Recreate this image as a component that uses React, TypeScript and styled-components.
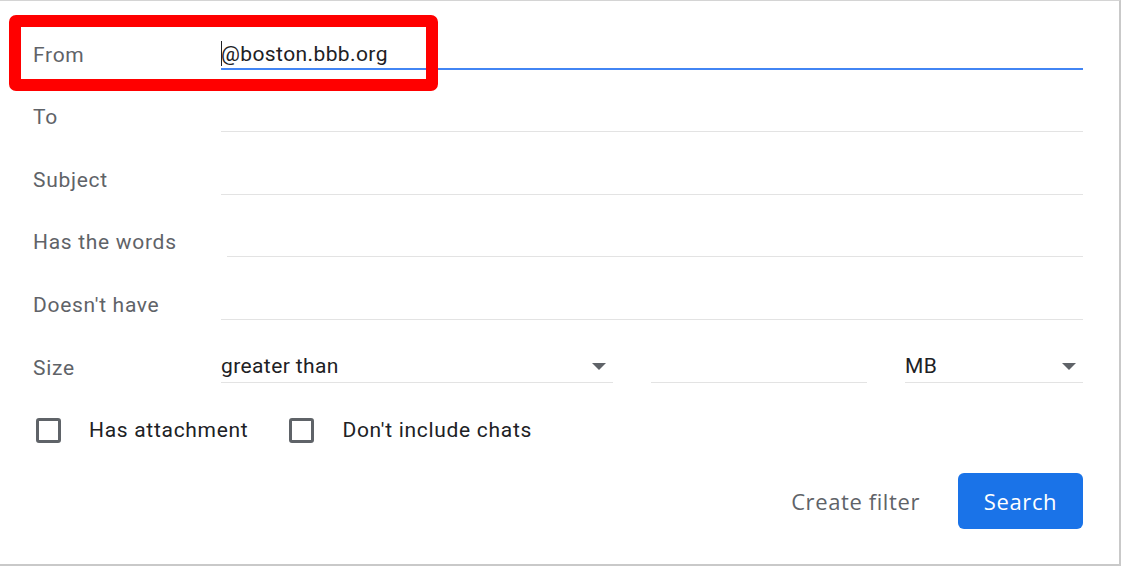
import styled, { createGlobalStyle } from "styled-components";

const GlobalStyle = createGlobalStyle`
  html, body {
    margin: 0;
    padding: 0;
    background: #ffffff;
  }
  body {
    font-family: Roboto, "Noto Sans", Arial, sans-serif;
  }
`;

const textFields = [
  { label: "From", value: "@boston.bbb.org", focused: true },
  { label: "To" },
  { label: "Subject" },
  { label: "Has the words", indent: 6 },
  { label: "Doesn't have" },
];

function Caret() {
  return <CaretBar />;
}

function DropArrow() {
  return (
    <ArrowIcon width="14" height="7" viewBox="0 0 14 7">
      <path d="M0 0h14L7 7z" fill="#5f6368" />
    </ArrowIcon>
  );
}

function App() {
  return (
    <>
      <GlobalStyle />
      <Dialog>
        <Form>
          {textFields.map((f) => (
            <Row key={f.label}>
              <Label>{f.label}</Label>
              <Field $focused={f.focused} $indent={f.indent ?? 0}>
                {f.focused && <Caret />}
                {f.value}
              </Field>
            </Row>
          ))}

          <Row>
            <Label>Size</Label>
            <SizeGroup>
              <Field $indent={0}>
                <SelectText>greater than</SelectText>
                <DropArrow />
              </Field>
              <Field $indent={0} />
              <Field $indent={0}>
                <SelectText>MB</SelectText>
                <DropArrow />
              </Field>
            </SizeGroup>
          </Row>
        </Form>

        <CheckRow>
          <CheckItem>
            <Box />
            <CheckLabel>Has attachment</CheckLabel>
          </CheckItem>
          <CheckItem>
            <Box />
            <CheckLabel>Don't include chats</CheckLabel>
          </CheckItem>
        </CheckRow>

        <Footer>
          <TextButton>Create filter</TextButton>
          <PrimaryButton>Search</PrimaryButton>
        </Footer>

        <Highlight />
      </Dialog>
    </>
  );
}

const Dialog = styled.div`
  position: relative;
  box-sizing: border-box;
  width: 1121px;
  height: 566px;
  border-top: 1px solid #d4d4d4;
  border-right: 2px solid #c9c9c9;
  border-bottom: 2px solid #c9c9c9;
  background: #ffffff;
`;

const Form = styled.div`
  display: flex;
  flex-direction: column;
  padding: 6px 36px 0 33px;
`;

const Row = styled.div`
  display: grid;
  grid-template-columns: 188px 1fr;
  align-items: end;
  height: 62.6px;
`;

const Label = styled.span`
  font-size: 21px;
  line-height: 28px;
  letter-spacing: 0.7px;
  color: #5f6368;
  padding-bottom: 1px;
`;

const Field = styled.div<{ $focused?: boolean; $indent: number }>`
  display: flex;
  align-items: center;
  height: 28px;
  margin-left: ${(p) => p.$indent}px;
  font-size: 21px;
  line-height: 28px;
  letter-spacing: 0.4px;
  color: #202124;
  border-bottom: ${(p) => (p.$focused ? "2px solid #4285f4" : "1px solid #e3e3e3")};
`;

const CaretBar = styled.span`
  display: inline-block;
  width: 1px;
  height: 25px;
  margin-right: -1px;
  background: #202124;
`;

const SizeGroup = styled.div`
  display: grid;
  grid-template-columns: 392px 1fr 178px;
  column-gap: 38px;
`;

const SelectText = styled.span`
  flex: 1;
  margin-top: -3px;
`;

const ArrowIcon = styled.svg`
  margin-right: 7px;
  margin-bottom: 2px;
`;

const CheckRow = styled.div`
  display: flex;
  gap: 41px;
  padding: 35px 0 0 36px;
`;

const CheckItem = styled.label`
  display: flex;
  align-items: center;
  gap: 28px;
`;

const Box = styled.span`
  box-sizing: border-box;
  width: 25px;
  height: 25px;
  border: 3px solid #5f6368;
  border-radius: 3px;
`;

const CheckLabel = styled.span`
  font-size: 21px;
  letter-spacing: 0.7px;
  color: #202124;
`;

const Footer = styled.div`
  display: flex;
  justify-content: flex-end;
  align-items: center;
  gap: 38px;
  padding: 30px 36px 0 0;
`;

const TextButton = styled.button`
  border: none;
  background: none;
  padding: 0;
  font-family: "Open Sans", Roboto, sans-serif;
  font-weight: 500;
  font-size: 22px;
  letter-spacing: 0.6px;
  color: #5f6368;
`;

const PrimaryButton = styled.button`
  width: 125px;
  height: 56px;
  border: none;
  border-radius: 6px;
  background: #1a73e8;
  color: #ffffff;
  font-family: "Open Sans", Roboto, sans-serif;
  font-weight: 500;
  font-size: 22px;
  letter-spacing: 0.6px;
`;

const Highlight = styled.div`
  position: absolute;
  left: 9px;
  top: 14px;
  width: 429px;
  height: 76px;
  box-sizing: border-box;
  border: 12px solid #ff0000;
  border-radius: 7px;
  pointer-events: none;
`;

export default App;
